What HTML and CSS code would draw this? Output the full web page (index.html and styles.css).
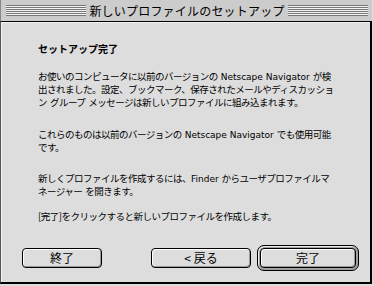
FILE: index.html
```html
<!DOCTYPE html>
<html lang="ja">
<head>
    <meta charset="UTF-8">
    <title>新しいプロファイルのセットアップ</title>
    <link rel="stylesheet" href="styles.css">
</head>
<body>
    <div class="window">
        <div class="titlebar">
            <span class="stripes"></span>
            <span class="title">新しいプロファイルのセットアップ</span>
            <span class="stripes"></span>
        </div>

        <div class="pane">
            <h1 class="heading">セットアップ完了</h1>

            <p class="para first">お使いのコンピュータに以前のバージョンの<span class="latin"> Netscape Navigator </span>が検<br>出されました。設定、ブックマーク、保存されたメールやディスカッショ<br>ン<span class="latin"> </span>グループ<span class="latin"> </span>メッセージは新しいプロファイルに組み込まれます。</p>

            <p class="para second">これらのものは以前のバージョンの<span class="latin"> Netscape Navigator </span>でも使用可能<br>です。</p>

            <p class="para third">新しくプロファイルを作成するには、<span class="latin">Finder </span>からユーザプロファイルマ<br>ネージャー<span class="latin"> </span>を開きます。</p>

            <p class="para fourth">[完了]をクリックすると新しいプロファイルを作成します。</p>

            <div class="buttons">
                <button class="btn quit">終了</button>
                <button class="btn back">&lt; 戻る</button>
                <span class="default-ring">
                    <button class="btn done">完了</button>
                </span>
            </div>
        </div>
    </div>
</body>
</html>
```

FILE: styles.css
```css
body {
    margin: 0;
    padding: 0;
    background-color: #dddddd;
    font-family: "Noto Sans CJK JP", "Noto Sans", sans-serif;
    color: #000;
}

.window {
    width: 372px;
    height: 284px;
    display: flex;
    flex-direction: column;
}

.titlebar {
    display: flex;
    align-items: center;
    padding: 0 4px 0 5px;
    background-color: #cccccc;
    border-left: 1px solid #888;
    border-bottom: 1px solid #000;
    box-sizing: border-box;
    height: 22px;
}

.stripes {
    flex: 1;
    height: 11px;
    background: repeating-linear-gradient(to bottom, #777 0, #777 1px, #f4f4f4 1px, #f4f4f4 2px);
}

.title {
    font-size: 12px;
    letter-spacing: 0.2px;
    line-height: 21px;
    padding: 0 3px;
}

.pane {
    flex: 1;
    padding: 20px 0 0 37px;
    border-left: 1px solid #555;
    border-right: 2px solid #000;
    border-bottom: 2px solid #000;
    box-shadow: inset 1px 1px 0 #f4f4f4;
    background-color: #dddddd;
}

.heading {
    margin: 0;
    font-size: 10px;
    font-weight: bold;
    line-height: 13px;
}

.para {
    margin: 0;
    font-size: 9.5px;
    letter-spacing: -0.5px;
    line-height: 13px;
    white-space: pre;
}

.latin {
    font-family: "DejaVu Sans", sans-serif;
    font-size: 9px;
    line-height: 9px;
    letter-spacing: 0;
}

.first {
    margin-top: 15px;
}

.second {
    margin-top: 19px;
}

.third {
    margin-top: 18px;
}

.fourth {
    margin-top: 12px;
}

.buttons {
    display: flex;
    align-items: center;
    margin: 22px 0 0 -16px;
    width: 337px;
}

.btn {
    height: 20px;
    padding: 0;
    font-family: "Noto Sans CJK JP", sans-serif;
    font-size: 12px;
    line-height: 16px;
    color: #000;
    background-color: #dddddd;
    border: 1px solid #000;
    border-radius: 4px;
    box-shadow: inset 1px 1px 0 #fff, inset -1px -1px 0 #999;
}

.quit {
    width: 80px;
}

.back {
    width: 100px;
    margin-left: auto;
}

.default-ring {
    margin-left: 6px;
    padding: 2px;
    border: 1px solid #000;
    border-radius: 7px;
    background-color: #a0a0a0;
    box-shadow: inset 1px 1px 0 #eee;
    display: flex;
}

.done {
    width: 96px;
}
```
